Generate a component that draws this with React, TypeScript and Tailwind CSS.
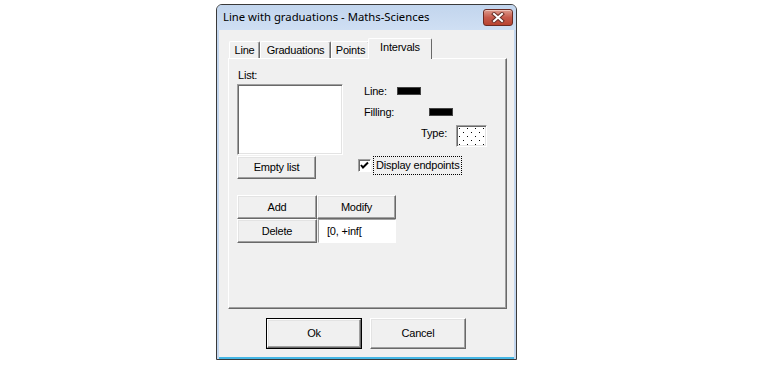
import React from "react";

const font = { fontFamily: '"Liberation Sans", Arial, sans-serif' };

const raised =
  "border border-t-white border-l-white border-r-[#696969] border-b-[#696969] shadow-[inset_-1px_-1px_0_#a0a0a0,inset_1px_1px_0_#e3e3e3] bg-[#f0f0f0]";
const sunken =
  "border border-t-[#a0a0a0] border-l-[#a0a0a0] border-r-white border-b-white shadow-[inset_1px_1px_0_#696969,inset_-1px_-1px_0_#e3e3e3] bg-white";

const Tab = ({ label, w, active }: { label: string; w: string; active?: boolean }) => (
  <div
    className={`${w} flex items-center justify-center border-l border-t border-r border-l-white border-t-white border-r-[#696969] rounded-t-[2px] bg-[#f0f0f0] ${
      active ? "h-[21px] -ml-[2px] -mb-[1px] pb-[3px] z-10" : "h-[17px] shadow-[inset_-1px_0_0_#a0a0a0]"
    }`}
  >
    {label}
  </div>
);

const CloseButton = () => (
  <div className="w-[30px] h-[17px] rounded-[3px] border border-[#6b2a22] bg-gradient-to-b from-[#dc9a8d] via-[#c65a4c] to-[#b8432f] flex items-center justify-center shadow-[inset_0_1px_0_#efc2b8]">
    <svg width="14" height="11" viewBox="0 0 14 11">
      <path d="M3 2 L11 9 M11 2 L3 9" stroke="#6a3028" strokeWidth="4" strokeLinecap="square" />
      <path d="M3 2 L11 9 M11 2 L3 9" stroke="#ffffff" strokeWidth="2" strokeLinecap="square" />
    </svg>
  </div>
);

const Checkbox = () => (
  <div className="w-[13px] h-[13px] border border-t-[#a0a0a0] border-l-[#a0a0a0] border-r-white border-b-white shadow-[inset_1px_1px_0_#696969] bg-white flex items-center justify-center">
    <svg width="9" height="9" viewBox="0 0 9 9">
      <path d="M1 4 L3 6.5 L8 1.5" stroke="#000" strokeWidth="2" fill="none" />
    </svg>
  </div>
);

const DotBox = () => (
  <div className={`w-[31px] h-[22px] ${sunken}`}>
    <svg width="100%" height="100%">
      <defs>
        <pattern id="dots" width="8" height="8" patternUnits="userSpaceOnUse">
          <rect x="2" y="2" width="1" height="1" fill="#000" />
          <rect x="6" y="6" width="1" height="1" fill="#000" />
        </pattern>
      </defs>
      <rect width="100%" height="100%" fill="url(#dots)" />
    </svg>
  </div>
);

export default function App() {
  return (
    <div className="w-[759px] h-[367px] bg-white pt-[4px] pl-[216px] text-[11px] tracking-[-0.2px] text-black" style={font}>
      <div className="w-[301px] h-[356px] rounded-t-[6px] border border-[#3a3a3a] bg-[#c3d6ee] flex flex-col">
        {/* title bar */}
        <div className="h-[25px] flex items-center justify-between pl-[6px] pr-[3px] bg-gradient-to-b from-[#c2d5ed] to-[#cfdff3] rounded-t-[5px]">
          <span className="text-[11.3px] tracking-normal" style={{ fontFamily: '"Noto Sans", "Open Sans", sans-serif' }}>
            Line with graduations - Maths-Sciences
          </span>
          <CloseButton />
        </div>
        {/* content */}
        <div className="flex-1 mx-[2px] bg-[#f0f0f0] border-b-[2px] border-b-[#45b6e4] flex flex-col px-[9px] pt-[8px]">
          <div className="h-[20px] flex items-end pl-[1px]">
            <Tab label="Line" w="w-[31px]" />
            <Tab label="Graduations" w="w-[71px]" />
            <Tab label="Points" w="w-[39px]" />
            <Tab label="Intervals" w="w-[64px]" active />
          </div>
          <div className="h-[251px] w-[279px] border border-t-white border-l-white border-r-[#696969] border-b-[#696969] shadow-[inset_-1px_-1px_0_#a0a0a0] flex flex-col pl-[8px]">
            <div className="flex">
              {/* left column */}
              <div className="w-[106px] flex flex-col pt-[9px]">
                <div className="h-[14px] leading-[14px] pl-[1px]">List:</div>
                <div className={`mt-[2px] h-[71px] ${sunken}`} />
                <div className={`mt-[1px] w-[79px] h-[23px] flex items-center justify-center ${raised}`}>Empty list</div>
              </div>
              {/* right column */}
              <div className="ml-[15px] flex flex-col pt-[25px]">
                <div className="h-[14px] flex items-center pl-[6px]">
                  <span className="w-[33px]">Line:</span>
                  <div className="w-[24px] h-[8px] bg-black border border-[#444]" />
                </div>
                <div className="mt-[7px] h-[14px] flex items-center pl-[6px]">
                  <span className="w-[65px]">Filling:</span>
                  <div className="w-[24px] h-[8px] bg-black border border-[#444]" />
                </div>
                <div className="mt-[6px] flex items-start pl-[6px]">
                  <span className="w-[83px] text-right mt-[1px] leading-[14px]">Type:</span>
                  <div className="ml-[9px]">
                    <DotBox />
                  </div>
                </div>
                <div className="mt-[9px] flex items-center">
                  <Checkbox />
                  <div className="ml-[2px] h-[19px] px-[2px] flex items-center border border-dotted border-black">
                    Display endpoints
                  </div>
                </div>
              </div>
            </div>
            {/* add / modify / delete */}
            <div className="mt-[16px] flex flex-col">
              <div className="flex">
                <div className={`w-[80px] h-[24px] flex items-center justify-center ${raised}`}>Add</div>
                <div className={`w-[79px] h-[24px] flex items-center justify-center ${raised}`}>Modify</div>
              </div>
              <div className="flex">
                <div className={`w-[80px] h-[24px] flex items-center justify-center ${raised}`}>Delete</div>
                <div className="ml-[1px] w-[78px] h-[24px] bg-white border border-t-[#a0a0a0] border-l-[#a0a0a0] border-r-white border-b-white flex items-center pl-[8px]">
                  [0, +inf[
                </div>
              </div>
            </div>
          </div>
          {/* ok / cancel */}
          <div className="mt-[9px] pl-[38px] flex gap-[8px]">
            <div className="w-[96px] h-[31px] border border-black">
              <div className={`w-full h-full flex items-center justify-center ${raised}`}>Ok</div>
            </div>
            <div className={`w-[96px] h-[31px] flex items-center justify-center ${raised}`}>Cancel</div>
          </div>
        </div>
      </div>
    </div>
  );
}
